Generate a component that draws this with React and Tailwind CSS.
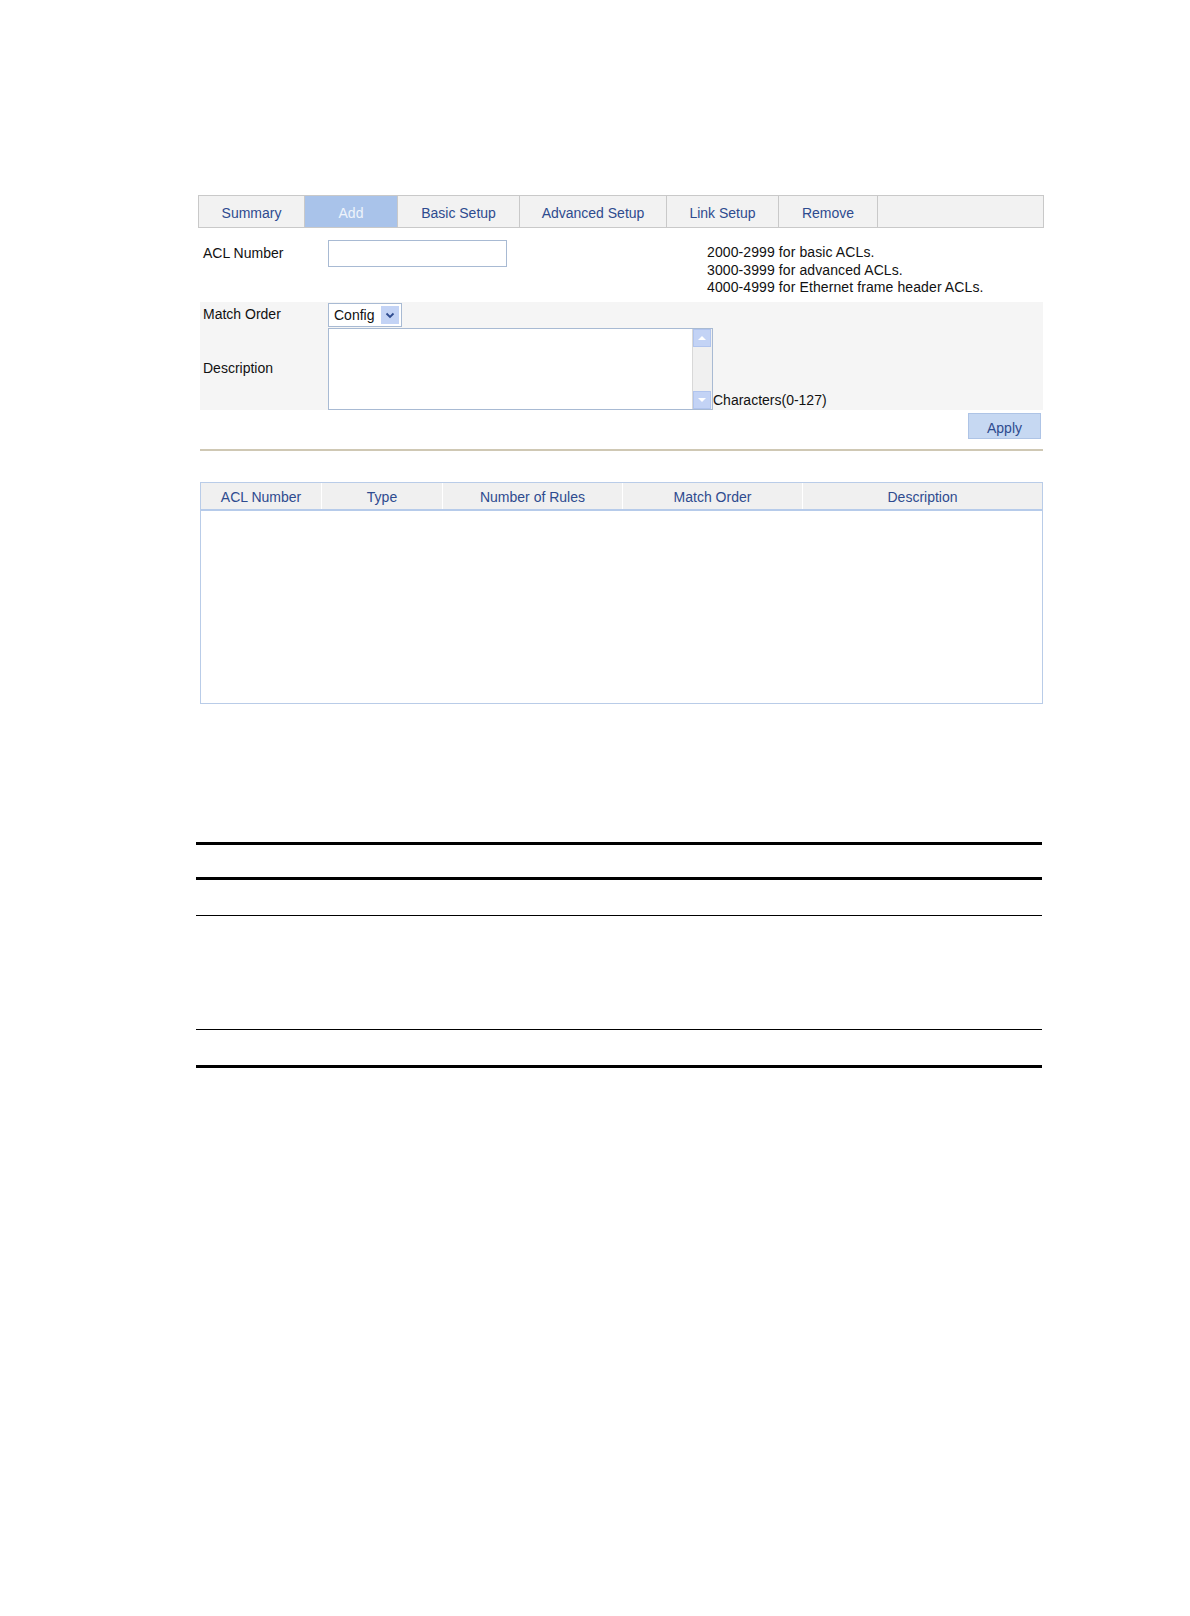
import React from 'react';

const tabs = [
    { label: 'Summary', w: 'w-[106px]' },
    { label: 'Add', w: 'w-[93px]', active: true },
    { label: 'Basic Setup', w: 'w-[122px]' },
    { label: 'Advanced Setup', w: 'w-[147px]' },
    { label: 'Link Setup', w: 'w-[112px]' },
    { label: 'Remove', w: 'w-[99px]' },
];

const columns = [
    { label: 'ACL Number', w: 'w-[121px]' },
    { label: 'Type', w: 'w-[121px]' },
    { label: 'Number of Rules', w: 'w-[180px]' },
    { label: 'Match Order', w: 'w-[180px]' },
    { label: 'Description', w: 'flex-1' },
];

const ScrollArrow = ({ up }) => (
    <div className="w-[18px] h-[18px] bg-[#c3d3f5] border border-[#b0c4ee] flex items-center justify-center">
        <svg width="10" height="6" viewBox="0 0 10 6">
            <path d={up ? 'M1 5 L5 1 L9 5 Z' : 'M1 1 L5 5 L9 1 Z'} fill="#ffffff" />
        </svg>
    </div>
);

export default function App() {
    return (
        <div className="w-[1190px] h-[1616px] bg-white font-['Liberation_Sans',Arial,sans-serif] text-[14px] text-[#111]">
            <div className="pt-[195px] pl-[198px] w-[846px] box-content">
                {/* Tabs */}
                <div className="flex h-[33px] border border-[#c9c9c9] bg-[#f2f2f2]">
                    {tabs.map((t) => (
                        <div
                            key={t.label}
                            className={`${t.w} flex items-center justify-center border-r border-[#c9c9c9] pt-[4px] ${t.active ? 'bg-[#a9c3ea] text-[#eef3fb]' : 'text-[#2e4b8f]'}`}
                        >
                            {t.label}
                        </div>
                    ))}
                    <div className="flex-1" />
                </div>

                <div className="ml-[2px] mr-[1px]">
                    {/* ACL Number row */}
                    <div className="flex h-[74px]">
                        <div className="w-[128px] pl-[3px] pt-[15px]">ACL Number</div>
                        <div className="pt-[12px]">
                            <div className="w-[179px] h-[27px] border border-[#a8bad3] bg-white" />
                        </div>
                        <div className="ml-[200px] pt-[16px] leading-[17.5px] tracking-[0.1px]">
                            <div>2000-2999 for basic ACLs.</div>
                            <div>3000-3999 for advanced ACLs.</div>
                            <div>4000-4999 for Ethernet frame header ACLs.</div>
                        </div>
                    </div>

                    {/* Match order + description */}
                    <div className="bg-[#f5f5f5] h-[108px] flex">
                        <div className="w-[128px] pl-[3px]">
                            <div className="pt-[2px] h-[25px]">Match Order</div>
                            <div className="pt-[31px]">Description</div>
                        </div>
                        <div>
                            <div className="pt-[1px] h-[26px]">
                                <div className="w-[74px] h-[24px] border border-[#a8bad3] bg-white flex items-center">
                                    <span className="pl-[5px] flex-1">Config</span>
                                    <div className="w-[18px] h-[18px] mr-[2px] bg-[#c3d3f5] flex items-center justify-center">
                                        <svg width="10" height="7" viewBox="0 0 10 7">
                                            <path d="M1.5 1.5 L5 5 L8.5 1.5" stroke="#2e4b8f" strokeWidth="1.8" fill="none" />
                                        </svg>
                                    </div>
                                </div>
                            </div>
                            <div className="flex items-end">
                                <div className="w-[385px] h-[82px] border border-[#a8bad3] bg-white flex justify-end">
                                    <div className="w-[20px] bg-[#f0f0f0] border-l border-[#d8d8d8] flex flex-col justify-between">
                                        <ScrollArrow up />
                                        <ScrollArrow />
                                    </div>
                                </div>
                                <div className="leading-[16px] pb-[2px]">Characters(0-127)</div>
                            </div>
                        </div>
                    </div>

                    {/* Apply */}
                    <div className="flex justify-end pt-[3px] pr-[2px] h-[39px]">
                        <div className="w-[73px] h-[26px] bg-[#c6d8f2] border border-[#aec4e6] text-[#2e4b8f] flex items-center justify-center pt-[4px]">
                            Apply
                        </div>
                    </div>
                    <div className="h-[2px] bg-[#cfc8b4]" />

                    {/* Table */}
                    <div className="mt-[31px] border border-[#b9cce8] h-[222px] flex flex-col">
                        <div className="flex h-[28px] bg-[#f0f0f0] border-b-2 border-[#b6cbea] text-[#2e4b8f]">
                            {columns.map((c, i) => (
                                <div
                                    key={c.label}
                                    className={`${c.w} flex items-center justify-center pt-[3px] ${i < columns.length - 1 ? 'border-r border-[#ffffff]' : ''}`}
                                >
                                    {c.label}
                                </div>
                            ))}
                        </div>
                        <div className="flex-1 bg-white" />
                    </div>
                </div>
            </div>

            {/* Empty document table lines */}
            <div className="ml-[196px] w-[846px] mt-[138px]">
                <div className="h-[3px] bg-black" />
                <div className="h-[32px]" />
                <div className="h-[3px] bg-black" />
                <div className="h-[35px]" />
                <div className="h-[1px] bg-black" />
                <div className="h-[113px]" />
                <div className="h-[1px] bg-black" />
                <div className="h-[35px]" />
                <div className="h-[3px] bg-black" />
            </div>
        </div>
    );
}
